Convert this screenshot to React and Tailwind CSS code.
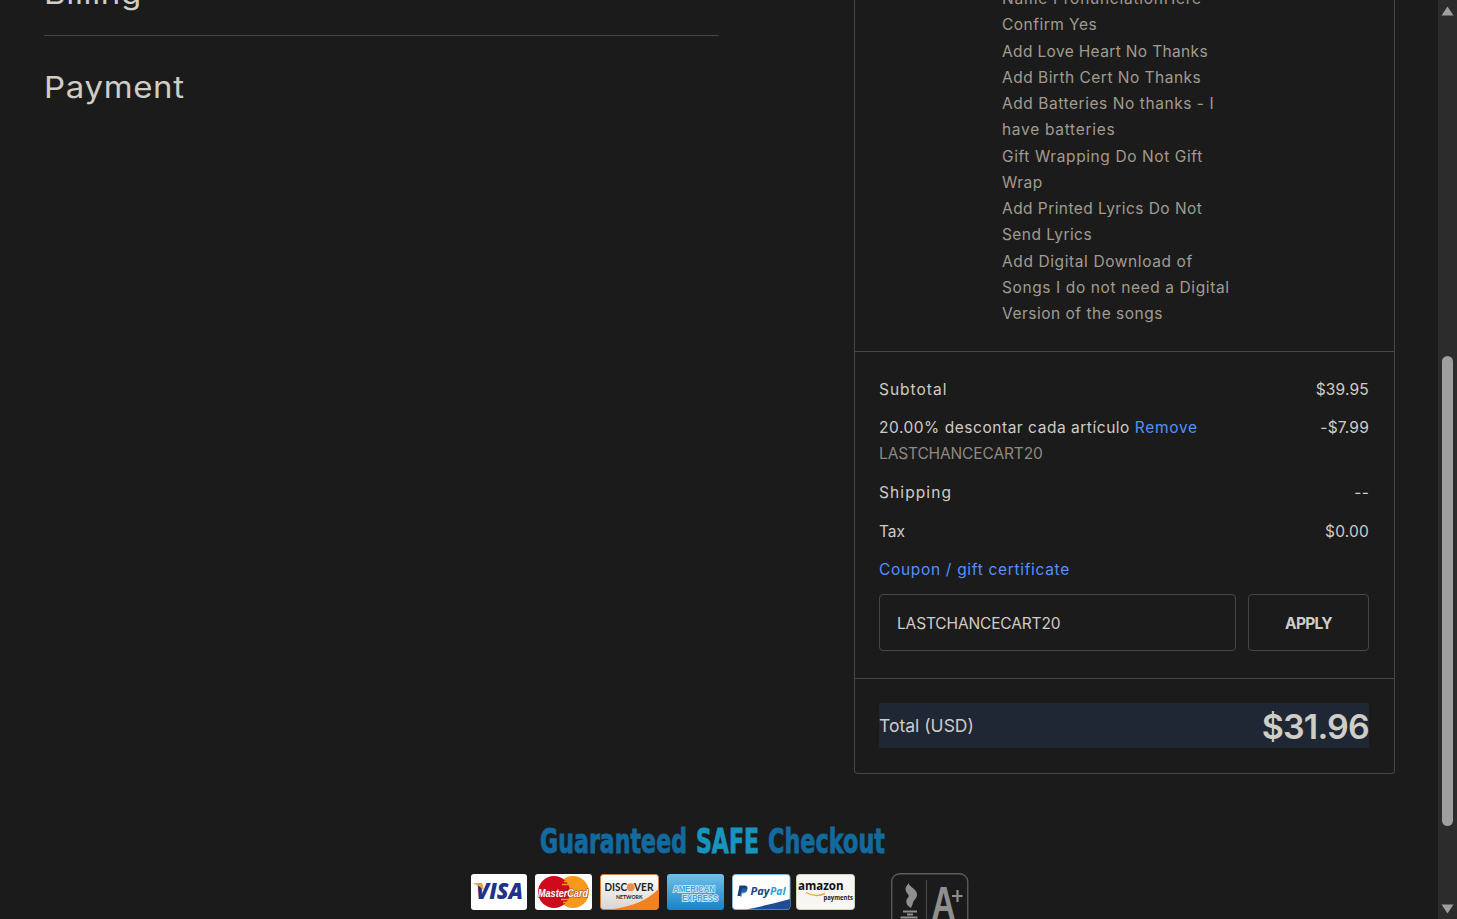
import React from "react";
import clsx from "clsx";

const OPTIONS = [
  { text: "Name PronunciationHere", className: "tracking-[0.75px]" },
  { text: "Confirm Yes", className: "tracking-[0.48px]" },
  { text: "Add Love Heart No Thanks", className: "tracking-[0.35px]" },
  { text: "Add Birth Cert No Thanks", className: "tracking-[0.49px]" },
  { text: "Add Batteries No thanks - I", className: "tracking-[0.56px]" },
  { text: "have batteries", className: "tracking-[0.7px]" },
  { text: "Gift Wrapping Do Not Gift", className: "tracking-[0.6px]" },
  { text: "Wrap", className: "tracking-[0.5px]" },
  { text: "Add Printed Lyrics Do Not", className: "tracking-[0.44px]" },
  { text: "Send Lyrics", className: "tracking-[0.43px]" },
  { text: "Add Digital Download of", className: "tracking-[0.6px]" },
  { text: "Songs I do not need a Digital", className: "tracking-[0.61px]" },
  { text: "Version of the songs", className: "tracking-[0.5px]" },
];

const borderClassname = "border-[#454746]";

export default function App() {
  return (
    <div className="flex h-screen overflow-hidden bg-[#1b1b1b] font-['Inter',sans-serif] text-[15.5px] leading-[26.25px] text-[#d0ccc6]">
      <div className="flex-1 flex flex-col overflow-hidden">
        <main className="flex h-[774px] shrink-0 justify-between pl-11 pr-[43px]">
          <CheckoutSteps />
          <OrderSummary />
        </main>
        <SafeCheckout />
      </div>
      <Scrollbar />
    </div>
  );
}

function CheckoutSteps() {
  const heading =
    "origin-left scale-x-110 text-[30px] leading-10 tracking-[0.6px] whitespace-nowrap";
  return (
    <div className="w-[675px]">
      <div className={clsx("h-9 flex flex-col justify-end border-b", borderClassname)}>
        <h2 className={clsx(heading, "w-fit pb-[22px]")}>Billing</h2>
      </div>
      <h2 className={clsx(heading, "w-fit pt-[31px]")}>Payment</h2>
    </div>
  );
}

function OrderSummary() {
  return (
    <aside className={clsx("w-[541px] border border-t-0 rounded-b", borderClassname)}>
      <section
        className={clsx(
          "h-[352px] flex flex-col justify-end border-b pl-[147px] pb-[23.7px] text-[#a29b91]",
          borderClassname
        )}
      >
        {OPTIONS.map((item) => (
          <div key={item.text} className="shrink-0">
            <span className={clsx("whitespace-nowrap", item.className)}>{item.text}</span>
          </div>
        ))}
      </section>
      <section
        className={clsx(
          "h-[327px] flex flex-col gap-[12.3px] border-b pl-6 pr-[25px] pt-[25px]",
          borderClassname
        )}
      >
        <Row label="Subtotal" value="$39.95" className="tracking-[1px]" />
        <div className="-mt-[0.5px] pb-[0.5px]">
          <div className="flex justify-between">
            <div className="whitespace-nowrap">
              <span className="tracking-[0.53px]">20.00% descontar cada artículo </span>
              <a className="tracking-[0.7px] text-[#5291ff]">Remove</a>
            </div>
            <span className="tracking-[0.2px]">-$7.99</span>
          </div>
          <div className="tracking-[-0.13px] text-[#8f8981]">LASTCHANCECART20</div>
        </div>
        <Row label="Shipping" value="--" className="tracking-[1.1px]" />
        <Row label="Tax" value="$0.00" />
        <a className="tracking-[0.68px] text-[#5291ff]">Coupon / gift certificate</a>
        <div className="-mt-0.5 flex gap-3">
          <div
            className={clsx(
              "w-[357px] h-[57px] flex items-center rounded border pl-[17px] pt-[3px] tracking-[-0.15px]",
              borderClassname
            )}
          >
            LASTCHANCECART20
          </div>
          <button
            className={clsx(
              "flex-1 h-[57px] rounded border pt-[3px] font-bold tracking-[-0.7px]",
              borderClassname
            )}
          >
            APPLY
          </button>
        </div>
      </section>
      <section className="pl-6 pr-[25px] pt-6">
        <div className="h-[45px] flex items-center justify-between bg-[#1e2733]">
          <span className="pt-0.5 text-[17.5px]">Total (USD)</span>
          <span className="pt-0.5 text-[34px] leading-[45px] font-semibold tracking-[-0.8px]">$31.96</span>
        </div>
      </section>
    </aside>
  );
}

function Row({ label, value, className }) {
  return (
    <div className="flex justify-between">
      <span className={className}>{label}</span>
      <span className="tracking-[0.2px]">{value}</span>
    </div>
  );
}

function SafeCheckout() {
  return (
    <footer className="pt-[50px] pl-[471px]">
      <svg className="ml-[69px] overflow-visible" width="346" height="36" viewBox="0 0 346 36" fontFamily="'DejaVu Sans',sans-serif" fontWeight="bold" fontSize="33">
        <text x="0" y="28.500" textLength="147" lengthAdjust="spacingAndGlyphs" fill="#126a9e" stroke="#126a9e" strokeWidth="0.900">Guaranteed</text>
        <text x="156" y="28.500" textLength="63" lengthAdjust="spacingAndGlyphs" fill="#1795bf" stroke="#1795bf" strokeWidth="0.900">SAFE</text>
        <text x="228" y="28.500" textLength="117" lengthAdjust="spacingAndGlyphs" fill="#126a9e" stroke="#126a9e" strokeWidth="0.900">Checkout</text>
      </svg>
      <div className="flex gap-2 pt-3.5">
        <Visa />
        <MasterCard />
        <Discover />
        <Amex />
        <PayPal />
        <Amazon />
        <AccreditedSeal />
      </div>
    </footer>
  );
}

function Visa() {
  return (
    <svg width="56" height="36" viewBox="0 0 56 36" className="shrink-0">
      <rect width="56" height="36" rx="3" fill="#fff" />
      <text x="5" y="25" textLength="47" lengthAdjust="spacingAndGlyphs" fontFamily="'Open Sans',sans-serif" fontWeight="800" fontStyle="italic" fontSize="22" fill="#20318a">VISA</text>
      <path d="M3 9h6.500q2 0 2.400 2l1 6Q9 11.500 3 9.700Z" fill="#e8a33d" />
    </svg>
  );
}

function MasterCard() {
  return (
    <svg width="57" height="36" viewBox="0 0 57 36" className="shrink-0">
      <rect width="57" height="36" rx="3" fill="#fff" />
      <circle cx="38" cy="18" r="16" fill="#f79a1c" />
      <circle cx="19" cy="18" r="16" fill="#cf0a1c" />
      <path d="M29 7.500h4M27 10.500h6M26 25.500h7M28 28.500h4" stroke="#f79a1c" strokeWidth="1.500" />
      <text x="3" y="22.500" textLength="50" lengthAdjust="spacingAndGlyphs" fontFamily="'Liberation Sans',sans-serif" fontWeight="bold" fontStyle="italic" fontSize="11.500" fill="#fff" stroke="#a03020" strokeWidth="1" paintOrder="stroke">MasterCard</text>
    </svg>
  );
}

function Discover() {
  return (
    <svg width="59" height="36" viewBox="0 0 59 36" className="shrink-0" fontFamily="Lato,sans-serif">
      <defs>
        <linearGradient id="discover" x1="0" y1="0" x2="0" y2="1">
          <stop offset="0" stopColor="#fff" />
          <stop offset="1" stopColor="#d9d5d1" />
        </linearGradient>
      </defs>
      <rect x="0.500" y="0.500" width="58" height="35" rx="3" fill="url(#discover)" stroke="#d9803c" />
      <path d="M58.500 15v17.500q0 3-3 3H7Q41 33 58.500 15Z" fill="#f08221" />
      <g fill="#222" fontWeight="bold">
        <text x="4.500" y="17" fontSize="11" textLength="22.500" lengthAdjust="spacingAndGlyphs">DISC</text>
        <text x="34" y="17" fontSize="11" textLength="19.500" lengthAdjust="spacingAndGlyphs">VER</text>
        <text x="16" y="24.500" fontSize="6" textLength="26.500" lengthAdjust="spacingAndGlyphs">NETWORK</text>
      </g>
      <circle cx="30.700" cy="13.200" r="3.900" fill="#ef8c4c" />
    </svg>
  );
}

function Amex() {
  return (
    <svg width="57" height="36" viewBox="0 0 57 36" className="shrink-0">
      <defs>
        <linearGradient id="amex" x1="0" y1="0" x2="0" y2="1">
          <stop offset="0" stopColor="#6fc1e9" />
          <stop offset="1" stopColor="#1683cb" />
        </linearGradient>
      </defs>
      <rect width="57" height="36" rx="3" fill="url(#amex)" />
      <g fontFamily="'Liberation Sans',sans-serif" fontWeight="bold" fontSize="8.500" fill="#3f9fd9" stroke="#d9f0fb" strokeWidth="1.600" paintOrder="stroke">
        <text x="6" y="17.500" textLength="42" lengthAdjust="spacingAndGlyphs">AMERICAN</text>
        <text x="15" y="26.500" textLength="36" lengthAdjust="spacingAndGlyphs">EXPRESS</text>
      </g>
    </svg>
  );
}

function PayPal() {
  return (
    <svg width="58.5" height="36" viewBox="0 0 58.5 36" className="shrink-0">
      <rect x="0.500" y="0.500" width="57.500" height="35" rx="3" fill="#fff" stroke="#8ab5dc" />
      <path d="M58 25v7.500q0 3-3 3H14Q39 30.500 58 25Z" fill="#1e4c98" />
      <path d="M7.500 11.500h5q3.500.3 3 3.500-.6 3.500-4.500 3.500H9.500l-.8 3.500H5.500Z" fill="#1c3a7e" />
      <path d="M10 14.500h5q.8 5-4.700 5.200l-.6 3H8Z" fill="#2379bd" fillOpacity="0.6" />
      <g fontFamily="'Open Sans',sans-serif" fontWeight="bold" fontStyle="italic" fontSize="10.500">
        <text x="18.500" y="20.500" textLength="19" lengthAdjust="spacingAndGlyphs" fill="#20407f">Pay</text>
        <text x="38" y="20.500" textLength="15.500" lengthAdjust="spacingAndGlyphs" fill="#2a9bd8">Pal</text>
      </g>
    </svg>
  );
}

function Amazon() {
  return (
    <svg width="59" height="36" viewBox="0 0 59 36" className="-ml-[2.5px] shrink-0" fontFamily="'Open Sans',sans-serif" fontWeight="bold">
      <rect x="0.500" y="0.500" width="58" height="35" rx="3" fill="#f7f6f2" stroke="#d8d2b4" />
      <text x="2" y="16" fontSize="12.500" textLength="45.500" lengthAdjust="spacingAndGlyphs" fill="#111">amazon</text>
      <text x="27.500" y="26" fontSize="7.500" textLength="29.500" lengthAdjust="spacingAndGlyphs" fill="#222">payments</text>
      <path d="M10 18.500q10 5.500 19 1" fill="none" stroke="#eba63a" strokeWidth="1.400" />
    </svg>
  );
}

function AccreditedSeal() {
  return (
    <svg width="78" height="46" viewBox="0 0 78 46" className="-mt-px ml-[27.5px] shrink-0">
      <rect x="0.750" y="0.750" width="76" height="60" rx="8" fill="none" stroke="#5e5e5e" strokeWidth="1.300" />
      <path d="M35.500 7v39" stroke="#4c4c4c" />
      <path d="M17.500 10c1 4 8.500 6 8.500 11.500 0 4-3 5-4 8-.5 2-1 3.500-2 5.500-3-2-5.500-4-4.500-8 .5-2 3-3 2-5-1-1.500-3-3-3-6.500 0-2.500 2.500-3 3-5.500Z" fill="#8f8f8f" />
      <path d="M12 38.500h14M16 41.500h6M9.500 44.500h17" stroke="#8f8f8f" strokeWidth="2" />
      <text x="40.500" y="45.500" textLength="24" lengthAdjust="spacingAndGlyphs" fontFamily="'Liberation Sans',sans-serif" fontWeight="bold" fontSize="47" fill="#8f8f8f">A</text>
      <path d="M61 23h10.500M66.500 17v12" stroke="#8f8f8f" strokeWidth="2.200" />
    </svg>
  );
}

function Scrollbar() {
  return (
    <div className="w-[19px] flex flex-col items-center bg-[#2c2c2c] pt-1.5 pb-[5px]">
      <svg width="13" height="10" viewBox="0 0 13 10" fill="#9f9f9f">
        <path d="M6.500 0.500 12.500 9.500H0.500Z" />
      </svg>
      <div className="mt-[340px] h-[470px] w-[11px] rounded-full bg-[#9f9f9f]" />
      <svg className="mt-auto" width="13" height="10" viewBox="0 0 13 10" fill="#9f9f9f">
        <path d="M0.500 0.500H12.500L6.500 9.500Z" />
      </svg>
    </div>
  );
}
